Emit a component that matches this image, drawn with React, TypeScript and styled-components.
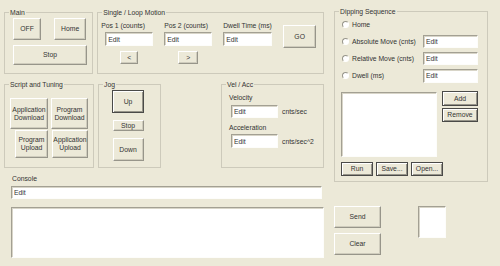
import React from 'react';
import styled, { createGlobalStyle, css } from 'styled-components';

const GlobalStyle = createGlobalStyle`
  html, body { margin: 0; padding: 0; background: #ECE9D8; }
  body {
    font-family: "Liberation Sans", Arial, sans-serif;
    font-size: 6.8px;
    color: #333;
  }
  * { box-sizing: border-box; }
`;

const Dialog = styled.div`
  width: 500px;
  height: 266px;
  display: flex;
  align-items: flex-start;
  gap: 7px;
  padding: 7px 0 0 4px;
  background: #ECE9D8;
  overflow: hidden;
`;

const LeftColumn = styled.div`
  width: 323px;
  display: flex;
  flex-direction: column;
  padding-top: 1px;
`;

const RightColumn = styled.div`
  width: 154px;
  display: flex;
  flex-direction: column;
`;

const GroupRow = styled.div<{ $mt?: number }>`
  display: flex;
  gap: 4px;
  margin-top: ${p => p.$mt ?? 0}px;
  padding-right: 3px;
`;

const Group = styled.fieldset<{ $w: number; $h: number; $push?: boolean }>`
  width: ${p => p.$w}px;
  height: ${p => p.$h}px;
  margin: 0;
  ${p => p.$push && css`margin-left: auto;`}
  padding: 0;
  min-width: 0;
  border: 1px solid #cdcabb;
`;

const Legend = styled.legend`
  margin-left: 4px;
  padding: 0 1px;
  height: 9px;
  line-height: 9px;
  font-size: 6.8px;
`;

const btnBase = css`
  margin: 0;
  padding: 0;
  font: inherit;
  color: #333;
  background: #ECE9D8;
  display: flex;
  align-items: center;
  justify-content: center;
  text-align: center;
  line-height: 8px;
  cursor: default;
`;

const Button = styled.button<{ $w: number; $h: number; $dark?: boolean }>`
  ${btnBase}
  width: ${p => p.$w}px;
  height: ${p => p.$h}px;
  border: 1px solid;
  border-color: #fff #97958a #97958a #fff;
  box-shadow: inset -1px -1px 0 #cfccbd;
  ${p => p.$dark && css`
    border-color: #4a4a48;
    box-shadow: inset 1px 1px 0 #fff, inset -1px -1px 0 #97958a;
  `}
`;

const Edit = styled.input<{ $w: number; $h?: number; $ml?: number }>`
  width: ${p => p.$w}px;
  height: ${p => p.$h ?? 13}px;
  margin: 0 0 0 ${p => p.$ml ?? 0}px;
  padding: 0 0 0 2px;
  font: inherit;
  color: #333;
  background: #fff;
  border: 1px solid;
  border-color: #a3a093 #fdfdfb #fdfdfb #a3a093;
  box-shadow: inset 1px 1px 0 #d8d5c8;
  outline: none;
`;

const Sunken = styled.div<{ $w: number; $h: number; $ml?: number }>`
  width: ${p => p.$w}px;
  height: ${p => p.$h}px;
  margin-left: ${p => p.$ml ?? 0}px;
  background: #fff;
  border: 1px solid;
  border-color: #a3a093 #fdfdfb #fdfdfb #a3a093;
  box-shadow: inset 1px 1px 0 #d8d5c8;
`;

const Label = styled.div<{ $shift?: number }>`
  height: 9px;
  line-height: 9px;
  white-space: nowrap;
  margin-left: ${p => p.$shift ?? 0}px;
`;

/* Main */
const MainGrid = styled.div`
  display: grid;
  grid-template-columns: 28px 32px;
  justify-content: space-between;
  row-gap: 5px;
  padding: 1px 6px 0 8px;
`;

const Span2 = styled.div`
  grid-column: 1 / 3;
`;

/* Single / Loop */
const MotionGrid = styled.div`
  display: grid;
  grid-template-columns: 48px 48px 49px 33px;
  grid-template-rows: 9px 14px 13px;
  column-gap: 11px;
  row-gap: 2px;
  padding: 4px 0 0 7px;
`;

const ArrowCell = styled.div`
  grid-row: 3;
  justify-self: center;
  margin-top: 3px;
`;

const GoCell = styled.div`
  grid-column: 4;
  grid-row: 1 / 4;
  margin-top: 4px;
`;

/* Script and Tuning */
const ScriptGrid = styled.div`
  display: grid;
  grid-template-columns: 38px 37px;
  grid-template-rows: 31px 28px;
  column-gap: 3px;
  row-gap: 1px;
  justify-items: end;
  padding: 9px 0 0 5px;
`;

/* Jog */
const JogStack = styled.div`
  display: flex;
  flex-direction: column;
  align-items: center;
  gap: 7px;
  padding: 1px 3px 0 0;
`;

/* Vel / Acc */
const VelStack = styled.div`
  display: flex;
  flex-direction: column;
  padding: 4px 0 0 7px;
`;

const UnitRow = styled.div<{ $mt: number }>`
  display: flex;
  align-items: center;
  gap: 4px;
  margin-top: ${p => p.$mt}px;
`;

const Spacer = styled.div<{ $h: number }>`
  height: ${p => p.$h}px;
`;

/* Console */
const ConsoleArea = styled.div`
  display: flex;
  flex-direction: column;
  padding-left: 7px;
  margin-top: 6px;
`;

/* Dipping */
const DipBody = styled.div`
  display: flex;
  flex-direction: column;
  padding: 0 9px 0 7px;
`;

const RadioGrid = styled.div`
  display: grid;
  grid-template-columns: 1fr 55px;
  grid-auto-rows: 17px;
  align-items: center;
`;

const RadioItem = styled.label`
  display: flex;
  align-items: center;
  gap: 3px;
  white-space: nowrap;
  grid-column: 1;
`;

const RadioDot = styled.span`
  flex: none;
  width: 7px;
  height: 7px;
  border-radius: 50%;
  background: #fff;
  border: 1px solid;
  border-color: #97958a #fff #fff #97958a;
`;

const ListRow = styled.div`
  display: flex;
  gap: 5px;
  margin: 8px 0 0 -1px;
  align-items: flex-start;
`;

const SideButtons = styled.div`
  display: flex;
  flex-direction: column;
  gap: 2px;
  margin-top: -1px;
`;

const FileButtons = styled.div`
  display: flex;
  gap: 3px;
  margin: 5px 0 0 -1px;
`;

const BottomRow = styled.div`
  display: flex;
  align-items: flex-start;
  margin-top: 24px;
`;

const SendStack = styled.div`
  display: flex;
  flex-direction: column;
  gap: 5px;
`;

export default function App() {
  return (
    <>
      <GlobalStyle />
      <Dialog>
        <LeftColumn>
          <GroupRow>
            <Group $w={90} $h={66}>
              <Legend>Main</Legend>
              <MainGrid>
                <Button $w={28} $h={22}>OFF</Button>
                <Button $w={32} $h={22}>Home</Button>
                <Span2>
                  <Button $w={74} $h={20}>Stop</Button>
                </Span2>
              </MainGrid>
            </Group>
            <Group $w={229} $h={66}>
              <Legend>Single / Loop Motion</Legend>
              <MotionGrid>
                <Label $shift={-4}>Pos 1 (counts)</Label>
                <Label>Pos 2 (counts)</Label>
                <Label>Dwell Time (ms)</Label>
                <Edit $w={48} $h={14} defaultValue="Edit" readOnly />
                <Edit $w={48} $h={14} defaultValue="Edit" readOnly />
                <Edit $w={49} $h={14} defaultValue="Edit" readOnly />
                <ArrowCell>
                  <Button $w={18} $h={13}>&lt;</Button>
                </ArrowCell>
                <ArrowCell>
                  <Button $w={20} $h={13}>&gt;</Button>
                </ArrowCell>
                <GoCell>
                  <Button $w={33} $h={23}>GO</Button>
                </GoCell>
              </MotionGrid>
            </Group>
          </GroupRow>

          <GroupRow $mt={6}>
            <Group $w={90} $h={88}>
              <Legend>Script and Tuning</Legend>
              <ScriptGrid>
                <Button $w={38} $h={31}>Application<br />Download</Button>
                <Button $w={37} $h={31}>Program<br />Download</Button>
                <Button $w={33} $h={28}>Program<br />Upload</Button>
                <Button $w={36} $h={28}>Application<br />Upload</Button>
              </ScriptGrid>
            </Group>
            <Group $w={63} $h={88}>
              <Legend>Jog</Legend>
              <JogStack>
                <Button $w={32} $h={23} $dark>Up</Button>
                <Button $w={31} $h={11}>Stop</Button>
                <Button $w={31} $h={23}>Down</Button>
              </JogStack>
            </Group>
            <Group $w={103} $h={88} $push>
              <Legend>Vel / Acc</Legend>
              <VelStack>
                <Label>Velocity</Label>
                <UnitRow $mt={3}>
                  <Edit $w={47} $ml={2} defaultValue="Edit" readOnly />
                  <span>cnts/sec</span>
                </UnitRow>
                <Spacer $h={5} />
                <Label>Acceleration</Label>
                <UnitRow $mt={2}>
                  <Edit $w={47} $h={14} $ml={2} defaultValue="Edit" readOnly />
                  <span>cnts/sec^2</span>
                </UnitRow>
              </VelStack>
            </Group>
          </GroupRow>

          <ConsoleArea>
            <Label $shift={1}>Console</Label>
            <Spacer $h={3} />
            <Edit $w={311} defaultValue="Edit" readOnly />
            <Spacer $h={8} />
            <Sunken $w={313} $h={51} />
          </ConsoleArea>
        </LeftColumn>

        <RightColumn>
          <Group $w={154} $h={175}>
            <Legend>Dipping Sequence</Legend>
            <DipBody>
              <RadioGrid>
                <RadioItem><RadioDot />Home</RadioItem>
                <RadioItem><RadioDot />Absolute Move (cnts)</RadioItem>
                <Edit $w={55} defaultValue="Edit" readOnly />
                <RadioItem><RadioDot />Relative Move (cnts)</RadioItem>
                <Edit $w={55} defaultValue="Edit" readOnly />
                <RadioItem><RadioDot />Dwell (ms)</RadioItem>
                <Edit $w={55} $h={14} defaultValue="Edit" readOnly />
              </RadioGrid>
              <ListRow>
                <Sunken $w={100} $h={65} />
                <SideButtons>
                  <Button $w={36} $h={15} $dark>Add</Button>
                  <Button $w={36} $h={14} $dark>Remove</Button>
                </SideButtons>
              </ListRow>
              <FileButtons>
                <Button $w={32} $h={14} $dark>Run</Button>
                <Button $w={32} $h={14} $dark>Save...</Button>
                <Button $w={32} $h={14} $dark>Open...</Button>
              </FileButtons>
            </DipBody>
          </Group>
          <BottomRow>
            <SendStack>
              <Button $w={47} $h={22}>Send</Button>
              <Button $w={47} $h={22}>Clear</Button>
            </SendStack>
            <Sunken $w={28} $h={32} $ml={37} />
          </BottomRow>
        </RightColumn>
      </Dialog>
    </>
  );
}
